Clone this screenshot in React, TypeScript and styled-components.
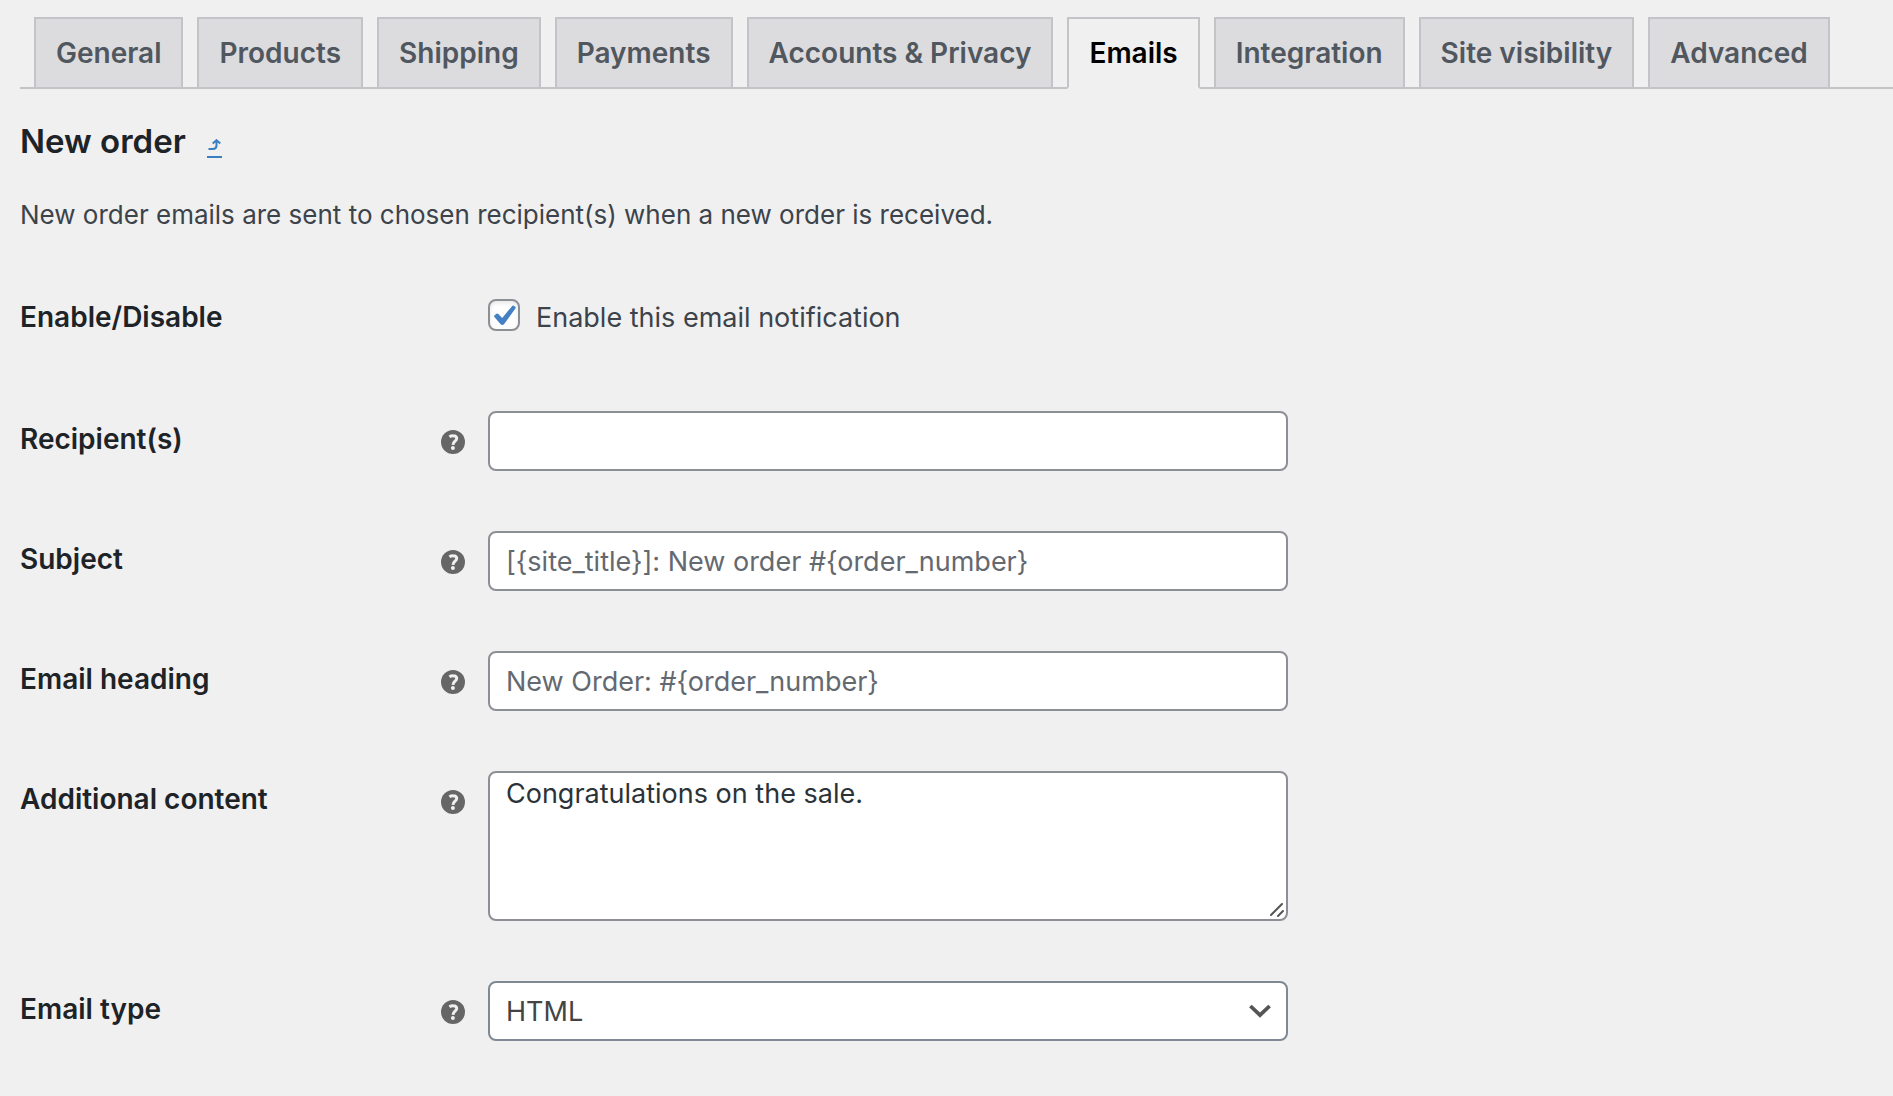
import React, { useState } from "react";
import styled, { createGlobalStyle } from "styled-components";

const GlobalStyle = createGlobalStyle`
  *, *::before, *::after { box-sizing: border-box; }
  body {
    margin: 0;
    background: #f0f0f0;
    color: #3c434a;
    font-family: Inter, Roboto, "Liberation Sans", sans-serif;
    font-size: 27px;
  }
`;

const Page = styled.main`
  padding: 17px 0 0 20px;
`;

const Tabs = styled.nav`
  display: flex;
  gap: 14px;
  padding-left: 14px;
  border-bottom: 2px solid #c3c4c7;
`;

const Tab = styled.a<{ $active: boolean }>`
  padding: 10px 20px;
  border: 2px solid #c3c4c7;
  border-bottom: ${(p) => (p.$active ? "2px solid #f0f0f0" : "0")};
  margin-bottom: ${(p) => (p.$active ? "-2px" : "0")};
  background: ${(p) => (p.$active ? "#f0f0f0" : "#dcdcde")};
  color: ${(p) => (p.$active ? "#000" : "#50575e")};
  font-size: 28px;
  font-weight: 600;
  line-height: 48px;
  text-decoration: none;
  white-space: nowrap;
`;

const Title = styled.h2`
  display: flex;
  align-items: center;
  gap: 21px;
  margin: 32px 0 0;
  color: #1d2327;
  font-size: 33px;
  font-weight: 600;
  line-height: 40px;
`;

const BackLink = styled.a`
  display: flex;
  padding: 8px 1px 6px;
  margin-top: 6px;
  border-bottom: 2px solid #3a80c0;
  color: #3a80c0;
`;

const Description = styled.p`
  margin: 34px 0 25px;
  font-size: 26px;
  line-height: 39px;
`;

const Row = styled.div`
  display: grid;
  grid-template-columns: 421px minmax(0, 1fr);
`;

const RowLabel = styled.label`
  padding: 40px 20px 40px 0;
  color: #1d2327;
  font-size: 28px;
  font-weight: 600;
  line-height: 36px;
`;

const Cell = styled.div`
  display: grid;
  grid-template-columns: 24px minmax(0, 800px);
  column-gap: 23px;
  align-items: start;
  padding: 30px 20px 30px 0;
`;

const HelpButton = styled.button`
  display: flex;
  margin: 19px 0 0;
  padding: 0;
  border: 0;
  background: none;
  color: #666;
`;

const CheckLabel = styled.label`
  display: flex;
  grid-column: 2;
  align-items: center;
  gap: 16px;
  padding: 8px 0 12px;
  line-height: 42px;
`;

const CheckFrame = styled.span`
  display: grid;
  margin-bottom: 6px;
`;

const Checkbox = styled.input`
  grid-area: 1 / 1;
  width: 32px;
  height: 32px;
  margin: 0;
  border: 2px solid #8c8f94;
  border-radius: 8px;
  appearance: none;
  background: #fff;
  box-shadow: inset 0 2px 4px rgba(0, 0, 0, 0.1);
`;

const CheckMark = styled.svg`
  grid-area: 1 / 1;
  pointer-events: none;
`;

const TextInput = styled.input`
  width: 100%;
  height: 60px;
  padding: 0 16px;
  border: 2px solid #8c8f94;
  border-radius: 8px;
  background: #fff;
  color: #2c3338;
  font: inherit;
  &::placeholder { color: #646970; opacity: 1; }
`;

const Overlay = styled.div`
  display: grid;
  align-items: center;
`;

const TextArea = styled.textarea`
  display: block;
  grid-area: 1 / 1;
  width: 100%;
  height: 150px;
  padding: 1px 16px;
  border: 2px solid #8c8f94;
  border-radius: 8px;
  background: #fff;
  color: #2c3338;
  font: inherit;
  line-height: 39px;
  resize: vertical;
  &::-webkit-resizer { display: none; }
`;

const Grip = styled.svg`
  grid-area: 1 / 1;
  place-self: end;
  margin: 4px;
  pointer-events: none;
`;

const Select = styled.select`
  grid-area: 1 / 1;
  width: 100%;
  height: 60px;
  padding: 0 48px 0 16px;
  border: 2px solid #7e8993;
  border-radius: 8px;
  appearance: none;
  background: #fff;
  color: #444;
  font: inherit;
`;

const Chevron = styled.svg`
  grid-area: 1 / 1;
  justify-self: end;
  margin-right: 17px;
  pointer-events: none;
`;

const tabs = [
  "General",
  "Products",
  "Shipping",
  "Payments",
  "Accounts & Privacy",
  "Emails",
  "Integration",
  "Site visibility",
  "Advanced",
];

function Help({ topic }: { topic: string }) {
  return (
    <HelpButton type="button" aria-label={`Help: ${topic}`}>
      <svg width="24" height="24" viewBox="0 0 24 24" fill="none" aria-hidden="true">
        <circle cx="12" cy="12" r="12" fill="currentColor" />
        <path
          d="M8.4 6.8C9.8 5.9 11 5.6 12.4 5.7C14.6 5.8 15.9 6.9 15.7 8.7C15.4 11.2 12.2 11.4 12 14.8"
          stroke="#f0f0f0"
          strokeWidth="3"
        />
        <circle cx="11.9" cy="18.1" r="2" fill="#f0f0f0" />
      </svg>
    </HelpButton>
  );
}

function Field({ id, label, children }: { id: string; label: string; children: React.ReactNode }) {
  return (
    <Row>
      <RowLabel htmlFor={id}>{label}</RowLabel>
      <Cell>
        <Help topic={label} />
        {children}
      </Cell>
    </Row>
  );
}

export default function App() {
  const [enabled, setEnabled] = useState(true);
  return (
    <>
      <GlobalStyle />
      <Page>
        <Tabs>
          {tabs.map((name) => (
            <Tab key={name} href="#" $active={name === "Emails"}>
              {name}
            </Tab>
          ))}
        </Tabs>
        <Title>
          New order
          <BackLink href="#" aria-label="Return to emails">
            <svg width="13" height="11" viewBox="0 0 13 11" fill="none" stroke="currentColor" strokeWidth="2" aria-hidden="true">
              <path d="M0.5 10H5C7.4 10 8.5 8.8 8.5 6.6V1.4M4.7 4.6L8.5 1.2L12.3 4.6" />
            </svg>
          </BackLink>
        </Title>
        <Description>New order emails are sent to chosen recipient(s) when a new order is received.</Description>
        <form>
          <Row>
            <RowLabel htmlFor="enabled">Enable/Disable</RowLabel>
            <Cell>
              <CheckLabel>
                <CheckFrame>
                  <Checkbox
                    id="enabled"
                    type="checkbox"
                    checked={enabled}
                    onChange={(e) => setEnabled(e.target.checked)}
                  />
                  {enabled && (
                    <CheckMark width="32" height="32" viewBox="0 0 32 32" aria-hidden="true">
                      <path
                        d="M6.4 16.6L8.4 14.8Q9.4 14 10.4 15L14.2 19L24 7.2Q24.8 6.2 25.8 6.8L27.2 7.8Q28.2 8.4 27.4 9.4L16.2 25Q14.4 27 12.4 25L6.4 18Q5.8 17.2 6.4 16.6Z"
                        fill="#4480c4"
                      />
                    </CheckMark>
                  )}
                </CheckFrame>
                Enable this email notification
              </CheckLabel>
            </Cell>
          </Row>
          <Field id="recipient" label="Recipient(s)">
            <TextInput id="recipient" type="text" />
          </Field>
          <Field id="subject" label="Subject">
            <TextInput id="subject" type="text" placeholder="[{site_title}]: New order #{order_number}" />
          </Field>
          <Field id="heading" label="Email heading">
            <TextInput id="heading" type="text" placeholder="New Order: #{order_number}" />
          </Field>
          <Field id="content" label="Additional content">
            <Overlay>
              <TextArea id="content" defaultValue="Congratulations on the sale." />
              <Grip width="14" height="14" viewBox="0 0 14 14" stroke="#555" strokeWidth="2" strokeLinecap="round" aria-hidden="true">
                <path d="M1 12L12 1M8 13L13 8" />
              </Grip>
            </Overlay>
          </Field>
          <Field id="type" label="Email type">
            <Overlay>
              <Select id="type" defaultValue="html">
                <option value="plain">Plain text</option>
                <option value="html">HTML</option>
                <option value="multipart">Multipart</option>
              </Select>
              <Chevron width="22" height="14" viewBox="0 0 22 14" fill="none" stroke="#555" strokeWidth="3.8" aria-hidden="true">
                <path d="M1.4 2L11 11.2L20.6 2" />
              </Chevron>
            </Overlay>
          </Field>
        </form>
      </Page>
    </>
  );
}
